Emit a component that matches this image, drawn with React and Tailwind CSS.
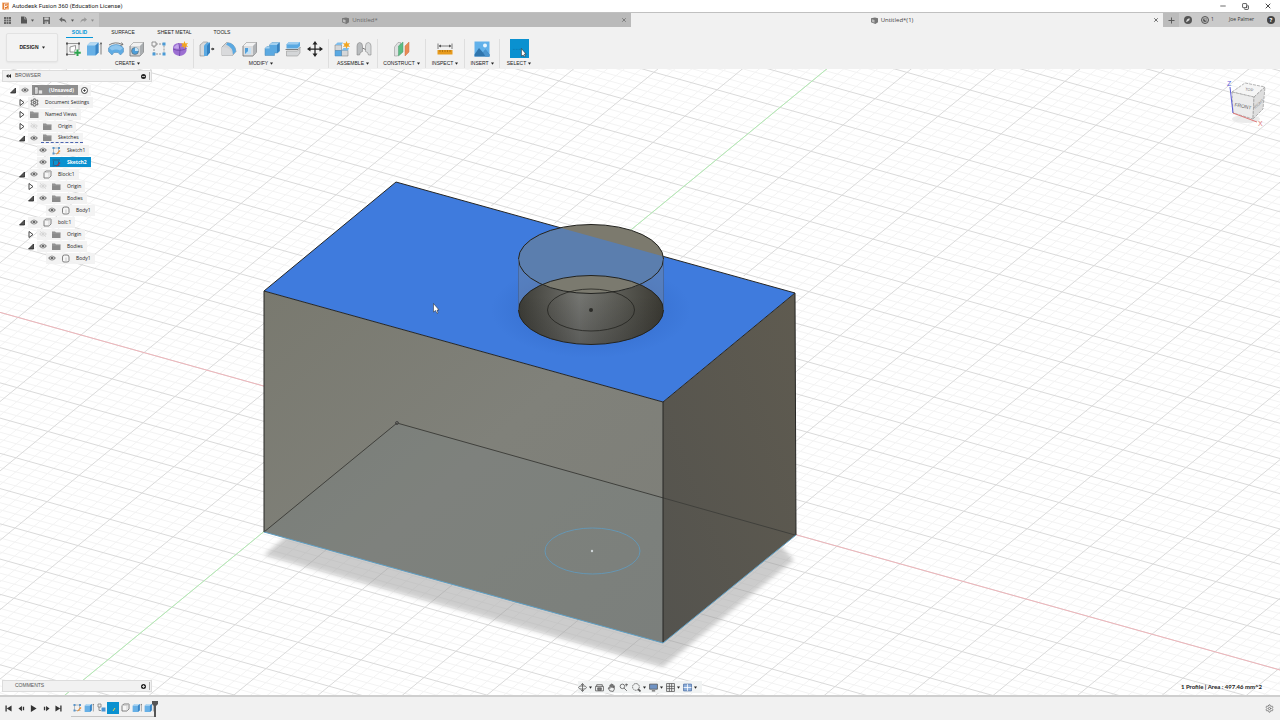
import React, { useState } from 'react';
import { Minus, X, Plus, Copy, Settings } from 'lucide-react';

/* ---------- small glyphs ---------- */

const Caret = ({ className = '' }) => (
  <svg viewBox="0 0 4 3" className={`w-[3px] h-[3px] shrink-0 ${className}`}><path d="M0 0h4L2 3z" fill="currentColor" /></svg>
);

const Eye = ({ faint }) => (
  <svg viewBox="0 0 16 12" className="w-2 h-[6px]" opacity={faint ? 0.22 : 1}>
    <path d="M0 6Q8-4 16 6Q8 16 0 6z" fill="#8c8c8c" />
    <circle cx="8" cy="6" r="3.6" fill="#e9e9e9" />
    <circle cx="8" cy="6" r="2.4" fill="#666" />
    {faint && <path d="M2 0l12 12" stroke="#777" strokeWidth="1.5" />}
  </svg>
);

const Arrow = ({ open }) => (
  <svg viewBox="0 0 12 14" className="w-[6px] h-[7px]">
    {open
      ? <path d="M1 12L11 2v10z" fill="#555" stroke="#222" strokeWidth="1.5" />
      : <path d="M2 1l8 6-8 6z" fill="#fff" stroke="#333" strokeWidth="1.8" />}
  </svg>
);

const Folder = () => (
  <svg viewBox="0 0 18 14" className="w-[9px] h-[7px]">
    <path d="M0 1h6l2 2h9v11H0z" fill="#8b8b8b" /><path d="M0 4h17" stroke="#adadad" />
  </svg>
);

const Box = () => (
  <svg viewBox="0 0 18 18" className="w-[9px] h-[9px]">
    <path d="M2 5l4-3h10v10l-4 4H2z" fill="#f6f6f6" stroke="#666" strokeWidth="1.6" strokeLinejoin="round" />
    <path d="M2 5h10v11M12 5l4-3" fill="none" stroke="#c4c4c4" strokeWidth="1.4" />
  </svg>
);

const Body = () => (
  <svg viewBox="0 0 18 18" className="w-[9px] h-[9px]">
    <path d="M3 6q0-4 4-4h5q4 0 4 4v7q0 3-4 3H6q-3 0-3-3z" fill="#f6f6f6" stroke="#666" strokeWidth="1.6" />
    <path d="M10 7v8" stroke="#ccc" strokeWidth="2" />
  </svg>
);

const SketchGlyph = ({ active }) => (
  <svg viewBox="0 0 18 18" className="w-[9px] h-[9px]">
    <path d="M3 4v11h12M3 4h10v8" fill="none" stroke={active ? '#37526c' : '#9aa0a6'} strokeWidth="1.4" />
    <path d="M1 2h4v4H1zM12 2h4v4h-4zM1 13h4v4H1z" fill={active ? '#1577ad' : '#5a94c8'} />
    <path d="M9 15l6-7 2 2-6 6-3 1z" fill={active ? '#a8324a' : '#e8913a'} />
  </svg>
);

const Assembly = () => (
  <svg viewBox="0 0 20 18" className="w-[10px] h-[9px]">
    <path d="M1 2h7v14H1z" fill="#f4f4f4" stroke="#666" strokeWidth="1.3" />
    <path d="M4 5v9M9 8h8v8H9z" fill="#e4e4e4" stroke="#888" strokeWidth="1.3" />
  </svg>
);

const Gear = () => <Settings className="w-[9px] h-[9px]" strokeWidth={3} color="#777" />;

/* ---------- ribbon drawings, all on a 32 grid ---------- */

const Cuboid = ({ front = '#6db5ea', top = '#a9d3f2', side = '#3d86c4' }) => (
  <>
    <path d="M2 10l7-7h20v19l-7 8H2z" fill={front} stroke="#666" strokeWidth="1.5" />
    <path d="M2 10l7-7h20l-7 7z" fill={top} />
    <path d="M22 10l7-7v19l-7 8z" fill={side} />
  </>
);

const ICONS = {
  sketch: (
    <>
      <path d="M4 5v22h17M4 5h24v13" fill="none" stroke="#777" strokeWidth="1.5" />
      <path d="M2 3h4v4H2zM26 3h4v4h-4zM2 25h4v4H2z" fill="#555" />
      <path d="M10 22V12l11-3v6q0 5-4 7z" fill="#fff" stroke="#777" strokeWidth="1.5" />
      <path d="M25 17v13M18.500 23.500h13" stroke="#2da44e" strokeWidth="4" />
    </>
  ),
  extrude: (
    <>
      <path d="M2 9l6-6h17v20l-6 6H2z" fill="#67b0e6" />
      <path d="M2 9l6-6h17l-6 6z" fill="#b5d9f2" /><path d="M19 9l6-6v20l-6 6z" fill="#3a86c6" />
      <path d="M30 4v23M28 7l2-4 2 4" stroke="#555" strokeWidth="1.500" fill="none" />
    </>
  ),
  revolve: (
    <>
      <path d="M1 14Q5 7 16 7t15 7v8l-6 6-5-5h-8l-4 5-7-7z" fill="#5fabe3" stroke="#4d87b4" />
      <path d="M2 14q14-12 28 0l-6 5q-8-4-16 0z" fill="#8fc6ee" />
      <path d="M2 8q12-8 27-1M27 3l3 4-5 2" fill="none" stroke="#555" strokeWidth="1.5" />
    </>
  ),
  hole: (
    <>
      <Cuboid front="#d4d6d8" top="#f1f1f1" side="#a9adb0" />
      <circle cx="12" cy="20" r="7" fill="#4d9ed9" stroke="#555" /><path d="M12 13a7 7 0 017 7l-7 0z" fill="#c9e4f6" />
    </>
  ),
  pattern: (
    <>
      <path d="M6 10v15M10 6h15M26 9v14M10 26h12" stroke="#777" strokeWidth="1.5" strokeDasharray="4 2" />
      <path d="M2 2h8v8H2z" fill="#f4f4f4" stroke="#777" strokeWidth="1.5" />
      <path d="M23 3h6v6h-6zM3 23h6v6H3zM23 23h6v6h-6z" fill="#4b9bd7" />
    </>
  ),
  form: (
    <>
      <path d="M2 14q0-9 12-10 13 0 15 10v6q-3 9-14 10Q3 28 2 20z" fill="#9c6fd2" />
      <path d="M2 16q13 6 27-1M13 5q5 11 2 25" stroke="#6b41a3" strokeWidth="1.5" fill="none" />
      <path d="M5 11q4-5 8-5l1 9q-5 1-10-1z" fill="#c2a3ea" />
      <path d="M25 0l2 5 5-1-3 4 3 4-5-1-2 5-2-5-5 1 3-4-3-4 5 1z" fill="#f2a51e" />
    </>
  ),
  press: (
    <>
      <path d="M2 8l7-6h8v21l-6 7H2z" fill="#d8dadb" stroke="#777" />
      <path d="M10 9l6-6h6v20l-6 7h-6z" fill="#5aa9e2" /><path d="M16 9l6-6v20l-6 7z" fill="#3581c0" />
      <path d="M24 16h4" stroke="#222" strokeWidth="2" /><path d="M27 13l4 3-4 3z" fill="#222" />
    </>
  ),
  fillet: (
    <>
      <path d="M2 12L11 3q17 1 19 18l-7 8H2z" fill="#d0d2d4" stroke="#777" />
      <path d="M13 3q15 1 17 18l-6 6Q24 13 10 7z" fill="#5aa9e2" /><path d="M2 12q19 0 21 17H2z" fill="#d9dadc" />
    </>
  ),
  shell: (
    <>
      <Cuboid front="#dcdddf" top="#f2f2f2" side="#b1b4b7" />
      <path d="M6 14h12v12H6z" fill="#4f9fda" /><path d="M6 26l5-5h7v5zM12 14h6v7h-6z" fill="#c2e0f5" />
    </>
  ),
  combine: (
    <>
      <path d="M11 8l5-5h15v17l-4 4h-6v5H2V15l4-4h5z" fill="#5ba9e1" stroke="#4b86b3" />
      <path d="M11 8l5-5h15l-5 5zM2 15l4-4h5v4z" fill="#a4d1f0" /><path d="M26 8l5-5v17l-5 4z" fill="#3782c0" />
    </>
  ),
  split: (
    <>
      <path d="M3 7l5-5h22v8l-5 5H3z" fill="#5aa9e2" /><path d="M3 7l5-5h22l-5 5z" fill="#9dcdf0" />
      <path d="M1 17h25l5-5" stroke="#555" fill="none" strokeWidth="1.500" />
      <path d="M3 20h22l5-5v9l-5 6H3z" fill="#d4d6d8" stroke="#888" />
    </>
  ),
  move: (
    <>
      <path d="M16 4v24M4 16h24" stroke="#222" strokeWidth="2.5" />
      <path d="M16 0l5 7H11zM16 32l5-7H11zM0 16l7-5v10zM32 16l-7-5v10z" fill="#222" />
    </>
  ),
  component: (
    <>
      <path d="M2 8h13v11H2zM15 19h13v11H15z" fill="#d5d7d9" stroke="#777" />
      <path d="M2 19h13v11H2z" fill="#5aa9e2" stroke="#4d87b4" /><path d="M2 8l5-5h11l-3 5zM15 19l4-5h11l-2 5z" fill="#7ebdec" />
      <path d="M25 0l2 5 5-1-3 4 3 4-5-1-2 5-2-5-5 1 3-4-3-4 5 1z" fill="#f2a51e" />
    </>
  ),
  joint: (
    <>
      <path d="M2 28V10q0-6 5-7 6 0 6 7v11l-4 2-2 5z" fill="#b9bcbe" stroke="#777" />
      <path d="M30 28V10q0-6-5-7-6 0-6 7v11l4 2 2 5z" fill="#d8dadb" stroke="#777" />
      <path d="M13 14l6 3" stroke="#777" strokeWidth="2" />
    </>
  ),
  construct: (
    <>
      <path d="M1 12L8 3h5v19l-6 8H1z" fill="#dfe1e2" stroke="#888" />
      <path d="M9 10l9-8v20l-9 8z" fill="#5bbd84" stroke="#4c9a6c" />
      <path d="M22 10l8-8v20l-8 8z" fill="#e98a55" stroke="#c9774b" />
    </>
  ),
  inspect: (
    <>
      <path d="M2 5v11M30 5v11M4 10h24" stroke="#555" strokeWidth="1.5" />
      <path d="M8 7l-5 3 5 3zM24 7l5 3-5 3z" fill="#555" />
      <path d="M1 18h30v9H1z" fill="#e79b1d" /><path d="M6 18v4M11 18v4M16 18v4M21 18v4M26 18v4" stroke="#a46707" strokeWidth="1.5" />
    </>
  ),
  insert: (
    <>
      <path d="M1 1h30v30H1z" fill="#62b1ea" /><path d="M1 27l9-13 8 9 5-6 8 10v4H1z" fill="#2f75ad" />
      <path d="M18 23l5-6 8 10v4h-8z" fill="#4b95cf" /><circle cx="22" cy="9" r="4" fill="#e9f6ff" />
    </>
  ),
};

const Icon = ({ name }) => <svg viewBox="0 0 32 32" className="w-4 h-4">{ICONS[name]}</svg>;

const GROUPS = [
  { label: 'CREATE', width: 'w-[132px]', pad: 'pl-[3px] pr-[5px]', icons: ['sketch', 'extrude', 'revolve', 'hole', 'pattern', 'form'] },
  { label: 'MODIFY', width: 'w-[135px]', pad: 'pl-[5px] pr-[5px]', icons: ['press', 'fillet', 'shell', 'combine', 'split', 'move'] },
  { label: 'ASSEMBLE', width: 'w-[49px]', pad: 'pl-[5px] pr-[5px]', icons: ['component', 'joint'] },
  { label: 'CONSTRUCT', width: 'w-[48px]', pad: 'px-[16px]', icons: ['construct'] },
  { label: 'INSPECT', width: 'w-[39px]', pad: 'px-[11px]', icons: ['inspect'] },
  { label: 'INSERT', width: 'w-[35px]', pad: 'px-[9px]', icons: ['insert'] },
];

/* ---------- title + tabs ---------- */

function TitleBar() {
  return (
    <header className="flex h-3 items-center justify-between bg-white pl-[2px] pr-[8px] text-[#222]">
      <div className="flex items-center gap-[3px]">
        <svg viewBox="0 0 16 18" className="w-[7px] h-2">
          <path d="M0 1h16v16H0z" fill="#f4b27a" /><path d="M3 2h11v4H8v3h5v4H8v4H3z" fill="#d9661a" /><path d="M5 3h8v2H7v4h4v2H7v5H5z" fill="#fff" />
        </svg>
        <h1 className="font-['Roboto',sans-serif] text-[6px] leading-3">Autodesk Fusion 360 (Education License)</h1>
      </div>
      <div className="flex items-center gap-[15px]">
        <button aria-label="Minimize"><Minus size={8} strokeWidth={2} /></button>
        <button aria-label="Restore"><Copy size={7} strokeWidth={2.5} className="-scale-x-100 rotate-90" /></button>
        <button aria-label="Close"><X size={8} strokeWidth={2.5} /></button>
      </div>
    </header>
  );
}

const DocCube = () => (
  <svg viewBox="0 0 16 16" className="w-[7px] h-[7px]">
    <path d="M0 3l9-2 7 2v9l-6 4-10-4z" fill="#777" /><path d="M2 5l6 2v6l-6-2z" fill="#bbb" />
  </svg>
);

function TabBar() {
  return (
    <div className="flex h-[15px] items-stretch border-t border-[#c0c0c0] bg-[#cacaca] font-['Open_Sans',sans-serif] text-[6px] text-[#555]">
      <div className="flex w-[99px] shrink-0 items-center pl-[4px]">
        <button aria-label="Data panel" className="mr-[10px]">
          <svg viewBox="0 0 14 14" className="w-[7px] h-[7px]" fill="#666"><path d="M0 0h4v4H0zM5 0h4v4H5zM10 0h4v4h-4zM0 5h4v4H0zM5 5h4v4H5zM10 5h4v4h-4zM0 10h4v4H0zM5 10h4v4H5zM10 10h4v4h-4z" /></svg>
        </button>
        <button aria-label="File" className="flex items-center gap-[4px]">
          <svg viewBox="0 0 14 16" className="w-[6px] h-2"><path d="M0 0h8v6h6v10H0z" fill="#555" /><path d="M9 0l5 5H9z" fill="#555" /></svg>
          <Caret />
        </button>
        <button aria-label="Save" className="mx-[9px]">
          <svg viewBox="0 0 16 16" className="w-[7px] h-[7px]"><path d="M0 0h16v16H0z" fill="#666" /><path d="M3 1h10v5H3zM4 10h8v6H4z" fill="#ccc" /><path d="M6 11h2v4H6z" fill="#666" /></svg>
        </button>
        <button aria-label="Undo" className="flex items-center gap-[4px]">
          <svg viewBox="0 0 18 14" className="w-2 h-[6px]"><path d="M0 6l7-6v4q9 0 10 10Q14 8 7 8v4z" fill="#666" /></svg>
          <Caret />
        </button>
        <button aria-label="Redo" className="ml-[6px] flex items-center gap-[4px] text-[#8d8d8d]">
          <svg viewBox="0 0 18 14" className="w-[7px] h-[6px]"><path d="M18 6l-7-6v4Q2 4 1 14q3-6 10-6v4z" fill="#999" /></svg>
          <Caret />
        </button>
      </div>
      <div className="flex flex-1 items-center bg-[#bababa] pr-[4px] text-[#6a6a6a]">
        <button className="flex flex-1 items-center justify-center gap-[3px]"><DocCube />Untitled*</button>
        <button aria-label="Close Untitled*"><X size={6} strokeWidth={3} /></button>
      </div>
      <div className="flex flex-1 items-center bg-[#f1f1f1] pr-[4px] text-[#444]">
        <button className="flex flex-1 items-center justify-center gap-[3px]"><DocCube />Untitled*(1)</button>
        <button aria-label="Close Untitled*(1)"><X size={6} strokeWidth={3} /></button>
      </div>
      <div className="flex w-[117px] shrink-0 items-center pr-[5px]">
        <button aria-label="New tab" className="flex h-full w-4 items-center justify-center bg-[#bcbcbc]"><Plus size={9} strokeWidth={2.5} /></button>
        <button aria-label="Extensions" className="ml-[5px]">
          <svg viewBox="0 0 16 16" className="w-2 h-2"><circle cx="8" cy="8" r="8" fill="#555" /><path d="M4 12l2-5 5-3v4l-4 3z" fill="#ddd" /></svg>
        </button>
        <button aria-label="Job status" className="ml-[9px] flex items-center gap-[2px] text-[5px] text-[#333]">
          <svg viewBox="0 0 16 16" className="w-2 h-2"><circle cx="8" cy="8" r="7" fill="#bbb" stroke="#555" strokeWidth="2" /><circle cx="8" cy="8" r="4" fill="#555" /><path d="M8 4v4h4" stroke="#eee" strokeWidth="1.500" fill="none" /></svg>
          1
        </button>
        <button className="ml-auto text-[5px] text-[#333]">Joe Palmer</button>
        <button aria-label="Help" className="ml-[13px] h-2 w-2 rounded-full bg-[#444] text-center text-[6px] font-bold leading-2 text-white">?</button>
      </div>
    </div>
  );
}

/* ---------- ribbon ---------- */

function Ribbon() {
  const [tab, setTab] = useState('SOLID');
  return (
    <div className="flex h-[42px] items-stretch bg-[#f1f1f1] pl-[6px] text-[5px] text-[#222]">
      <button className="mt-[6px] mr-[4px] flex h-[29px] w-[52px] items-center justify-center gap-[3px] rounded-[2px] border border-[#e2e2e2] bg-[#f3f3f3] font-bold shadow-xs">
        DESIGN <Caret />
      </button>
      <div className="flex flex-col">
        <nav className="flex h-[11px] items-stretch pl-[4px]">
          {[
            ['SOLID', 'w-[27px]'],
            ['SURFACE', 'w-[60px]'],
            ['SHEET METAL', 'w-[43px]'],
            ['TOOLS', 'w-[52px]'],
          ].map(([name, w]) => (
            <button key={name} onClick={() => setTab(name)}
              className={`whitespace-nowrap border-b leading-[10px] ${w} ${tab === name ? 'border-[#0696d7] font-bold text-[#0696d7]' : 'border-transparent'}`}>
              {name}
            </button>
          ))}
        </nav>
        <div className="flex flex-1">
          {GROUPS.map(g => (
            <div key={g.label} className={`my-[1px] flex flex-col border-r border-[#dedede] ${g.width}`}>
              <div className={`flex h-[19px] items-center justify-between ${g.pad}`}>
                {g.icons.map(n => <button key={n} aria-label={n}><Icon name={n} /></button>)}
              </div>
              <button className="flex items-center justify-center gap-[2px] leading-[10px]">{g.label}<Caret /></button>
            </div>
          ))}
          <div className="my-[1px] flex w-[38px] flex-col">
            <button aria-label="Select" className="mx-auto flex h-[19px] w-[19px] items-center justify-center bg-[#0a91d0]">
              <svg viewBox="0 0 20 20" className="h-[19px] w-[19px]"><path d="M3 11h9" stroke="#0b7fb8" strokeDasharray="2 1" /><path d="M12 10v8l2-1 1 2 1-1-1-2h2z" fill="#fff" stroke="#222" strokeWidth=".6" /></svg>
            </button>
            <button className="flex items-center justify-center gap-[2px] leading-[10px]">SELECT<Caret /></button>
          </div>
        </div>
      </div>
    </div>
  );
}

/* ---------- browser tree ---------- */

const INDENT = ['pl-[7px]', 'pl-[16px]', 'pl-[25px]', 'pl-[34px]'];

const TREE = [
  { level: 0, open: true, eye: 'on', icon: Assembly, label: '(Unsaved)', kind: 'root' },
  { level: 1, open: false, icon: Gear, label: 'Document Settings' },
  { level: 1, open: false, icon: Folder, label: 'Named Views' },
  { level: 1, open: false, eye: 'off', icon: Folder, label: 'Origin' },
  { level: 1, open: true, eye: 'on', icon: Folder, label: 'Sketches', kind: 'dashed' },
  { level: 2, eye: 'on', icon: SketchGlyph, label: 'Sketch1' },
  { level: 2, eye: 'on', icon: SketchGlyph, label: 'Sketch2', kind: 'selected' },
  { level: 1, open: true, eye: 'on', icon: Box, label: 'Block:1' },
  { level: 2, open: false, eye: 'off', icon: Folder, label: 'Origin' },
  { level: 2, open: true, eye: 'on', icon: Folder, label: 'Bodies' },
  { level: 3, eye: 'on', icon: Body, label: 'Body1' },
  { level: 1, open: true, eye: 'on', icon: Box, label: 'bolt:1' },
  { level: 2, open: false, eye: 'off', icon: Folder, label: 'Origin' },
  { level: 2, open: true, eye: 'on', icon: Folder, label: 'Bodies' },
  { level: 3, eye: 'on', icon: Body, label: 'Body1' },
];

const CHIP = {
  root: 'bg-[#8f8f8f] font-bold text-white',
  selected: 'bg-[#0a91d0] font-bold text-white',
  dashed: 'border-b border-dashed border-[#4a63b0]',
};

function TreeRow({ level, open, eye, icon: Glyph, label, kind }) {
  return (
    <li className={`flex h-3 items-center ${INDENT[level]}`}>
      <span className="flex w-3 justify-center">
        {open !== undefined && <button aria-label={`Toggle ${label}`}><Arrow open={open} /></button>}
      </span>
      <span className="flex h-[11px] items-center bg-[#f2f2f2]/90">
        {eye && <button aria-label={`Show ${label}`} className="mr-[1px] flex w-3 justify-center"><Eye faint={eye === 'off'} /></button>}
        <button className={`flex h-[10px] items-center pr-[4px] ${CHIP[kind] || ''}`}>
          <span className="flex w-[13px] justify-center"><Glyph active={kind === 'selected'} /></span>
          <span className="pl-[4px] leading-[9px]">{label}</span>
        </button>
        {kind === 'root' && (
          <input type="radio" name="active" defaultChecked aria-label="Activate component"
            className="mx-[3px] h-[7px] w-[7px] appearance-none rounded-full border border-[#444] bg-[radial-gradient(#333_25%,white_35%)]" />
        )}
      </span>
    </li>
  );
}

const PanelBar = ({ title, collapse }) => (
  <div className="flex h-3 w-[150px] items-center border border-[#dcdcdc] bg-[#f1f1f1] pl-[3px] font-['Liberation_Sans',sans-serif] text-[5px] text-[#555]">
    <span className="flex w-[9px]">
      {collapse && <svg viewBox="0 0 10 8" className="w-[5px] h-1"><path d="M5 0v8L0 4zM10 0v8L5 4z" fill="#222" /></svg>}
    </span>
    <h2 className="flex-1">{title}</h2>
    <button aria-label={`${title} options`} className="mr-[3px]">
      <svg viewBox="0 0 10 10" className="w-[5px] h-[5px]"><circle cx="5" cy="5" r="5" fill="#222" /><path d={collapse ? 'M2 5h6' : 'M2 5h6M5 2v6'} stroke="#eee" strokeWidth="1.500" /></svg>
    </button>
    <span className="h-2 w-[2px] border-l border-[#aaa]" />
  </div>
);

/* ---------- 3D view ---------- */

// Ground plane basis: one major cell along X and along Y, in view units.
const ORIGIN = [396, 423];
const CELL_X = [63, 17.600];
const CELL_Y = [32, -26.300];

const at = (u, v) => [
  ORIGIN[0] + u * CELL_X[0] + v * CELL_Y[0],
  ORIGIN[1] + u * CELL_X[1] + v * CELL_Y[1],
];

const gridLines = major => {
  let d = '';
  for (let i = -130; i <= 130; i++) {
    if ((i % 5 === 0) !== major) continue;
    const k = i / 5;
    const [a, b, c, e] = [at(k, -40), at(k, 40), at(-40, k), at(40, k)];
    d += `M${a}L${b}M${c}L${e}`;
  }
  return d;
};

const line = (a, b) => `M${a}L${b}`;

function Scene() {
  return (
    <svg viewBox="0 69 1280 626" preserveAspectRatio="xMidYMid slice" className="absolute inset-0 h-full w-full" role="img" aria-label="Block with bolt hole">
      <defs>
        <linearGradient id="front" x1="0" y1="0" x2="1" y2="1"><stop offset="0" stopColor="#79796f" /><stop offset=".5" stopColor="#80817a" /><stop offset="1" stopColor="#7d7e78" /></linearGradient>
        <linearGradient id="side" x1="1" y1="0" x2="0" y2="1"><stop offset="0" stopColor="#5f5b50" /><stop offset="1" stopColor="#54534e" /></linearGradient>
        <linearGradient id="bore"><stop offset="0" stopColor="#3c3c36" /><stop offset=".25" stopColor="#5c5c57" /><stop offset=".42" stopColor="#747571" /><stop offset=".7" stopColor="#5a5a54" /><stop offset="1" stopColor="#3a3932" /></linearGradient>
        <linearGradient id="boreShade" x1="0" y1="0" x2="0" y2="1"><stop offset=".3" stopColor="#222" stopOpacity="0" /><stop offset="1" stopColor="#222" stopOpacity=".3" /></linearGradient>
        <radialGradient id="glow"><stop offset=".65" stopColor="#2f66c4" stopOpacity=".35" /><stop offset="1" stopColor="#2f66c4" stopOpacity="0" /></radialGradient>
        <filter id="soft"><feGaussianBlur stdDeviation="2" /></filter>
        <clipPath id="mouth"><ellipse cx="591" cy="310" rx="72.500" ry="34.500" /></clipPath>
        <clipPath id="topFace"><path d="M396 182L795 293 663 402 264 291z" /></clipPath>
      </defs>

      <path d={gridLines(false)} stroke="#f3f3f3" strokeWidth="1" fill="none" />
      <path d={gridLines(true)} stroke="#dadada" strokeWidth="1" fill="none" />
      <path d={line(at(-20, 0), at(20, 0))} stroke="#eeb5ba" />
      <path d={line(at(0, -20), at(0, 20))} stroke="#b2ebb2" />

      {/* ground shadow */}
      <path d="M264 555L300 525 780 545 794 560 663 667z" fill="#9b9b9b" opacity=".5" filter="url(#soft)" />

      <path d="M264 291L396 182 795 293" fill="none" stroke="#fff" strokeWidth="5" />
      <path d="M264 291L663 402V643L264 532z" fill="url(#front)" />
      <path d="M663 402L795 293 796 535 663 643z" fill="url(#side)" />
      <path d="M396 182L795 293 663 402 264 291z" fill="#3f7bdd" />
      <ellipse cx="591" cy="310" rx="100" ry="48" fill="url(#glow)" clipPath="url(#topFace)" />

      {/* hidden bottom profile */}
      <path d="M397 423L663 497V643L264 532z" fill="#748894" opacity=".14" />
      <path d="M264 532L397 423 795 535" fill="none" stroke="#40403c" />
      <path d="M396 182L795 293 663 402 264 291zM264 291V532M663 402V643M795 293L796 535" fill="none" stroke="#262624" />
      <path d="M264 532L663 643 796 535" fill="none" stroke="#5f9fc4" />
      <ellipse cx="592.500" cy="551" rx="47.500" ry="23" fill="none" stroke="#6596b3" />
      <circle cx="592" cy="551" r="1.200" fill="#cfd6d8" />
      <circle cx="397" cy="423" r="1.500" fill="none" stroke="#444" />

      {/* bolt */}
      <path d="M518.500 259V310A72.500 34.500 0 00663.500 310V259z" fill="#7b8794" opacity=".4" />
      <ellipse cx="591" cy="310" rx="72.500" ry="34.500" fill="url(#bore)" />
      <ellipse cx="591" cy="310" rx="72.500" ry="34.500" fill="url(#boreShade)" />
      <ellipse cx="591" cy="259" rx="72.500" ry="34.500" fill="#7c7a6e" />
      <g clipPath="url(#topFace)"><ellipse cx="591" cy="259" rx="72.500" ry="34.500" fill="#5b7eae" /></g>
      <g clipPath="url(#mouth)"><ellipse cx="591" cy="259" rx="72.500" ry="34.500" fill="#7b7a6f" /></g>
      <g fill="none" stroke="#23231f">
        <ellipse cx="591" cy="259" rx="72.500" ry="34.500" />
        <ellipse cx="591" cy="310" rx="72.500" ry="34.500" />
        <ellipse cx="591" cy="310" rx="43.500" ry="21" strokeWidth=".8" />
        <path d="M518.500 259V310M663.500 259V310" stroke="#46618f" strokeWidth=".7" />
      </g>
      <circle cx="591" cy="310" r="2" fill="#2b2b28" />

      {/* pointer */}
      <path d="M433.500 303.500V312L435.500 310.500 437 313.500 438 313 437 310H439z" fill="#fff" stroke="#222" strokeWidth=".5" />
    </svg>
  );
}

const ViewCube = () => (
  <svg viewBox="0 0 48 52" className="absolute top-[8px] right-[10px] w-12 h-[52px] font-['Liberation_Sans',sans-serif]">
    <ellipse cx="24" cy="42" rx="14" ry="4" fill="#ddd" opacity=".6" />
    <g stroke="#999" strokeWidth=".7" strokeDasharray="3 1">
      <path d="M10 15L23 6 43 10 32 20z" fill="#f5f5f5" />
      <path d="M10 15L32 20 31 42 11 36z" fill="#ececec" />
      <path d="M32 20L43 10 41 32 31 42z" fill="#dedede" />
    </g>
    <path d="M8 10L11 36" stroke="#5a5ad8" /><path d="M11 36L35 45" stroke="#e07878" />
    <text x="5" y="9" fontSize="7" fill="#5a5ad8">Z</text>
    <text x="36" y="49" fontSize="7" fill="#e07878">X</text>
    <text x="21" y="31" fontSize="5" fill="#666" textAnchor="middle" transform="rotate(12 21 29)">FRONT</text>
    <text x="27" y="14" fontSize="4" fill="#777" textAnchor="middle" transform="rotate(8 27 14)">TOP</text>
    <text x="37" y="28" fontSize="4" fill="#888" textAnchor="middle" transform="rotate(-42 37 27)">RIGHT</text>
  </svg>
);

const NAV = [
  { label: 'Orbit', menu: true, art: <><ellipse cx="8" cy="8" rx="7" ry="3" /><path d="M8 1v14M5 4l3-3 3 3M5 12l3 3 3-3" /></> },
  { label: 'Look at', art: <><path d="M1 6h14v8H1zM3 6V3h10v3M4 9h8" /><path d="M5 9h6v4H5z" fill="#888" /></> },
  { label: 'Pan', art: <path d="M5 14L2 9l2-1 1 2V4h2v4-6h2v6-5h2v6l1-4h1v6l-2 4z" /> },
  { label: 'Zoom', art: <><circle cx="6" cy="6" r="4" /><path d="M9 9l5 5M11 3h5M13 1v5" /></> },
  { label: 'Fit', menu: true, art: <><circle cx="7" cy="7" r="6" strokeDasharray="3 1" /><path d="M11 11l4 4" strokeWidth="3" /></> },
  { label: 'Display settings', menu: true, art: <><path d="M1 2h14v9H1z" fill="#6f93c4" /><path d="M5 14h6" strokeWidth="2" /></> },
  { label: 'Grid and snaps', menu: true, art: <path d="M1 1h14v14H1zM1 6h14M1 10h14M6 1v14M10 1v14" /> },
  { label: 'Viewports', menu: true, art: <><path d="M1 2h14v12H1z" fill="#8fb0dc" stroke="#4a6ea5" /><path d="M8 2v12M1 8h14" stroke="#fff" /></> },
];

function Viewport() {
  return (
    <main className="relative flex-1 overflow-hidden bg-white font-['Open_Sans',sans-serif] text-[5px] text-[#222]">
      <Scene />
      <ViewCube />
      <aside className="absolute top-[1px] left-[2px]">
        <PanelBar title="BROWSER" collapse />
        <ul className="-ml-[2px] mt-[2px]">{TREE.map((n, i) => <TreeRow key={i} {...n} />)}</ul>
      </aside>
      <aside className="absolute bottom-[3px] left-[2px]"><PanelBar title="COMMENTS" /></aside>
      <div className="absolute bottom-[2px] left-1/2 flex h-3 w-[124px] -translate-x-1/2 items-center justify-between bg-[#f1f3f3] pr-[5px]">
        {NAV.map(n => (
          <button key={n.label} aria-label={n.label} className="flex items-center gap-[2px]">
            <svg viewBox="0 0 16 16" className="w-[9px] h-[9px]" fill="none" stroke="#555" strokeWidth="1.4">{n.art}</svg>
            {n.menu && <Caret />}
          </button>
        ))}
      </div>
      <output className="absolute right-[18px] bottom-[3px] font-['Lato',sans-serif] text-[6px] font-bold leading-[10px]">1 Profile | Area : 497.46 mm^2</output>
    </main>
  );
}

/* ---------- timeline ---------- */

const PLAY = [
  ['Go to start', 'M1 1h3v14H1zM15 1v14L4 8z'],
  ['Step back', 'M9 2v12L1 8zM11 4h3v8h-3z'],
  ['Play', 'M2 0l13 8-13 8z'],
  ['Step forward', 'M7 2v12l8-6zM2 4h3v8H2z'],
  ['Go to end', 'M12 1h3v14h-3zM1 1v14l11-7z'],
];

const Extrude = () => <svg viewBox="0 0 32 32" className="w-[10px] h-[10px]">{ICONS.extrude}</svg>;
const NewComp = () => (
  <svg viewBox="0 0 18 18" className="w-[9px] h-[9px]">
    <path d="M2 2h6v6H2zM4 8v7h4" fill="none" stroke="#777" strokeWidth="1.5" /><path d="M9 9h8v8H9z" fill="#4b95d4" />
  </svg>
);
const FEATURES = [SketchGlyph, Extrude, NewComp, null, Box, Extrude, Extrude];

function Timeline() {
  return (
    <footer className="flex h-[25px] shrink-0 items-center border-t-2 border-[#cfcfcf] bg-[#f1f1f1] pl-[5px] pr-[6px]">
      <div className="flex w-[57px] justify-between">
        {PLAY.map(([label, d]) => (
          <button key={label} aria-label={label}>
            <svg viewBox="0 0 16 16" className="w-[7px] h-[7px]"><path d={d} fill="#333" /></svg>
          </button>
        ))}
      </div>
      <ol className="ml-[9px] flex h-4 items-start border-b border-[#c4c4c4] pt-[1px]">
        {FEATURES.map((F, i) => (
          <li key={i}>
            <button aria-label={`Feature ${i + 1}`} className={`flex h-3 w-3 items-center justify-center ${F ? '' : 'bg-[#0a91d0]'}`}>
              {F ? <F /> : <svg viewBox="0 0 12 12" className="h-3 w-3"><path d="M6 9l2-3" stroke="#f2d34a" /></svg>}
            </button>
          </li>
        ))}
      </ol>
      <svg viewBox="0 0 6 16" className="-ml-[3px] h-4 w-[6px]"><path d="M0 0h6v3L4 5v11H2V5L0 3z" fill="#555" /></svg>
      <button aria-label="Timeline settings" className="ml-auto"><Settings size={9} strokeWidth={2.5} color="#777" /></button>
    </footer>
  );
}

export default function App() {
  return (
    <div className="flex h-screen flex-col overflow-hidden bg-white font-['Liberation_Sans',sans-serif]">
      <TitleBar />
      <TabBar />
      <Ribbon />
      <Viewport />
      <Timeline />
    </div>
  );
}
